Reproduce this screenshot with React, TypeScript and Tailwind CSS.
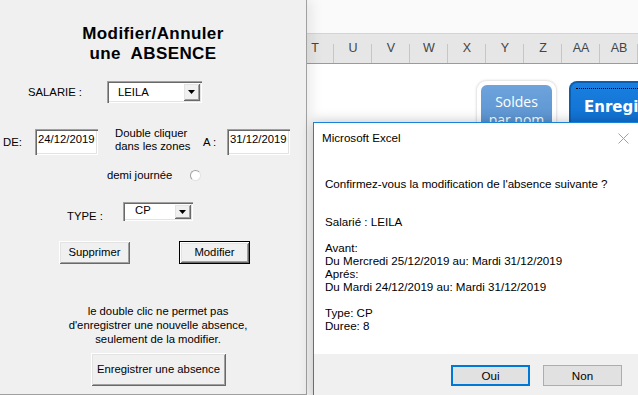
import React from "react"

const raised =
  "bg-[#f0f0f0] shadow-[inset_1px_1px_#ffffff,inset_-1px_-1px_#696969,inset_2px_2px_#e3e3e3,inset_-2px_-2px_#a0a0a0]"
const sunken =
  "bg-white shadow-[inset_1px_1px_#a0a0a0,inset_2px_2px_#696969,inset_-1px_-1px_#ffffff,inset_-2px_-2px_#e3e3e3]"

function Arrow() {
  return (
    <svg width="7" height="4" viewBox="0 0 7 4">
      <path d="M0 0h7L3.5 4z" fill="#000" />
    </svg>
  )
}

function Combo({ value, className, textClass }: { value: string; className: string; textClass: string }) {
  return (
    <div className={`${sunken} ${className} flex items-stretch p-[2px]`}>
      <span className={`flex-1 ${textClass}`}>{value}</span>
      <span className={`${raised} w-[17px] flex items-center justify-center`}>
        <Arrow />
      </span>
    </div>
  )
}

function DateField({ value }: { value: string }) {
  return (
    <div className={`${sunken} w-[63px] h-[26px] pl-[3px] pt-[3px] leading-[14px]`}>{value}</div>
  )
}

const columns = ["T", "U", "V", "W", "X", "Y", "Z", "AA", "AB"]

const message = [
  "Avant:",
  "Du Mercredi 25/12/2019 au: Mardi 31/12/2019",
  "Aprés:",
  "Du Mardi 24/12/2019 au: Mardi 31/12/2019",
]

export default function App() {
  return (
    <div className="relative flex w-[638px] h-[395px] overflow-hidden bg-white font-['Liberation_Sans',Arial,sans-serif] text-black">
      {/* userform */}
      <div className="relative z-10 w-[307px] h-[395px] shrink-0 flex flex-col bg-[#f0f0f0] border-r border-b border-[#a0a0a0] shadow-[5px_0_12px_rgba(0,0,0,0.08)] text-[11.3px]">
        <div className="pt-[24px] text-center text-[17px] tracking-[0.4px] leading-[20px] font-bold">
          Modifier/Annuler
          <br />
          une&nbsp; ABSENCE
        </div>

        <div className="mt-[17px] flex items-center h-[22px]">
          <span className="ml-[28px] w-[79px]">SALARIE :</span>
          <Combo value="LEILA" className="w-[95px] h-[22px]" textClass="pl-[9px] leading-[18px]" />
        </div>

        <div className="mt-[26px] flex items-center h-[26px]">
          <span className="ml-[3px] w-[32px]">DE:</span>
          <DateField value="24/12/2019" />
          <div className="ml-[17px] w-[88px] leading-[13px] -mt-[5px]">
            Double cliquer
            <br />
            dans les zones
          </div>
          <span className="w-[24px]">A :</span>
          <DateField value="31/12/2019" />
        </div>

        <div className="mt-[14px] ml-[107px] flex items-center h-[13px]">
          <span className="w-[83px]">demi journée</span>
          <span className="w-[11px] h-[11px] rounded-full bg-white border border-[#a0a0a0] border-b-[#e3e3e3] border-r-[#e3e3e3]" />
        </div>

        <div className="mt-[20px] flex items-start h-[19px]">
          <span className="ml-[67px] w-[56px] mt-[7px] leading-[14px]">TYPE :</span>
          <Combo value="CP" className="w-[70px] h-[19px]" textClass="pl-[10px] leading-[13px]" />
        </div>

        <div className="mt-[20px] flex h-[23px]">
          <button className={`${raised} ml-[59px] w-[71px] h-[23px]`}>Supprimer</button>
          <div className="ml-[49px] w-[71px] h-[23px] border border-black">
            <button className={`${raised} w-full h-full`}>Modifier</button>
          </div>
        </div>

        <p className="mt-[40px] pl-[10px] text-center leading-[14px]">
          le double clic ne permet pas
          <br />
          d'enregistrer une nouvelle absence,
          <br />
          seulement de la modifier.
        </p>

        <button className={`${raised} mt-[7px] ml-[91px] w-[135px] h-[33px]`}>Enregistrer une absence</button>
      </div>

      {/* sheet */}
      <div className="flex-1 flex flex-col overflow-hidden">
        <div className="h-[34px] bg-[#fafafa] border-b border-[#d4d4d4]" />
        <div className="h-[30px] flex -ml-[11px] bg-[#e6e6e6] border-b border-[#9b9b9b] text-[12.5px] text-[#444]">
          {columns.map((c) => (
            <div key={c} className="w-[38px] shrink-0 flex items-end justify-center pb-[5px] relative">
              {c}
              <span className="absolute right-0 top-[10px] bottom-0 w-px bg-[#c6c6c6]" />
            </div>
          ))}
        </div>
        <div className="flex-1 flex items-start pt-[17px] pl-[170px] gap-[13px]">
          <div className="w-[79px] h-[70px] shrink-0 rounded-[9px] bg-white p-[4px] shadow-[0_0_3px_rgba(0,0,0,0.25)]">
            <div className="h-full rounded-[6px] bg-[linear-gradient(#6ea3dc,#4f8cca)] text-white text-center text-[14px] leading-[18px] pt-[8px] font-['Open_Sans',sans-serif]">
              Soldes
              <br />
              par nom
            </div>
          </div>
          <div className="w-[90px] h-[70px] shrink-0 overflow-hidden rounded-[8px] bg-[#0b5fb3] p-[2px]">
            <div className="h-full rounded-[6px] bg-[linear-gradient(#1a7fe0,#0a68c8)] p-[5px]">
              <div className="h-full border-t border-dotted border-black pl-[8px] pt-[7px] text-white font-bold text-[15px] font-['DejaVu_Sans',sans-serif]">
                Enregis
              </div>
            </div>
          </div>
        </div>
      </div>

      {/* message box */}
      <div className="absolute z-20 left-[313px] top-[122px] w-[335px] h-[290px] flex flex-col bg-white border border-[#1883d7] shadow-[0_0_12px_rgba(0,0,0,0.25)] text-[11.6px]">
        <div className="h-[30px] flex items-center justify-between pl-[8px] pr-[18px]">
          <span>Microsoft Excel</span>
          <svg width="11" height="11" viewBox="0 0 11 11">
            <path d="M0.5 0.5l10 10M10.5 0.5l-10 10" stroke="#a0a0a0" strokeWidth="1" />
          </svg>
        </div>
        <div className="h-[201px] pl-[11px] pt-[24px] leading-[13px]">
          <p>Confirmez-vous la modification de l'absence suivante ?</p>
          <p className="mt-[25px]">Salarié : LEILA</p>
          <div className="mt-[13px]">
            {message.map((l) => (
              <p key={l}>{l}</p>
            ))}
          </div>
          <div className="mt-[13px]">
            <p>Type: CP</p>
            <p>Duree: 8</p>
          </div>
        </div>
        <div className="flex-1 bg-[#f0f0f0] flex items-start pt-[11px] pl-[137px] gap-[13px]">
          <button className="w-[79px] h-[21px] bg-[#e1e1e1] border-2 border-[#0078d7]">Oui</button>
          <button className="w-[79px] h-[21px] bg-[#e1e1e1] border border-[#adadad]">Non</button>
        </div>
      </div>
    </div>
  )
}
